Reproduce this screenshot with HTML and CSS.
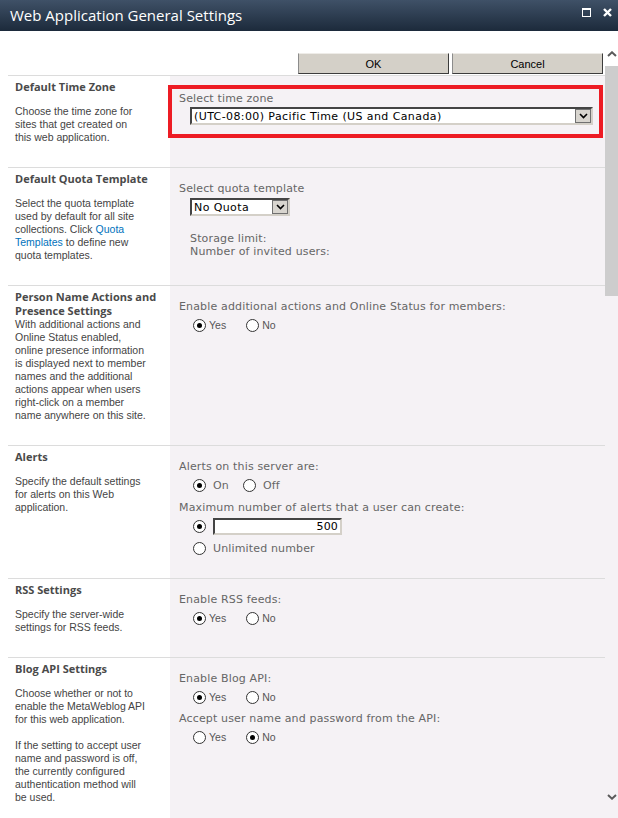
FILE: index.html
```html
<!DOCTYPE html>
<html lang="en">

<head>
    <meta charset="UTF-8">
    <title>Web Application General Settings</title>
    <link rel="stylesheet" href="styles.css">
</head>

<body>
    <div class="dialog">
        <div class="titlebar">
            <h1>Web Application General Settings</h1>
            <div class="window-buttons">
                <svg width="9" height="9" viewBox="0 0 9 9">
                    <rect x="0.5" y="0.5" width="8" height="8" fill="none" stroke="#fff" />
                    <rect x="0" y="0" width="9" height="2" fill="#fff" />
                </svg>
                <svg width="9" height="9" viewBox="0 0 9 9">
                    <path d="M1 1 L8 8 M8 1 L1 8" stroke="#fff" stroke-width="2.4" />
                </svg>
            </div>
        </div>

        <div class="viewport">
            <div class="page">
                <div class="toolbar">
                    <button class="btn" type="button">OK</button>
                    <button class="btn" type="button">Cancel</button>
                </div>

                <!-- time zone -->
                <div class="section">
                    <div class="section-info">
                        <h3>Default Time Zone</h3>
                        <p>Choose the time zone for<br>sites that get created on<br>this web application.</p>
                    </div>
                    <div class="section-body">
                        <div class="highlight">
                            <div class="field-label">Select time zone</div>
                            <div class="select select-timezone">
                                <span class="select-value">(UTC-08:00) Pacific Time (US and Canada)</span>
                                <span class="select-arrow">
                                    <svg width="9" height="6" viewBox="0 0 9 6"><path d="M1 1 L4.5 4.5 L8 1" fill="none" stroke="#000" stroke-width="1.6" /></svg>
                                </span>
                            </div>
                        </div>
                    </div>
                </div>

                <!-- quota -->
                <div class="section">
                    <div class="section-info">
                        <h3>Default Quota Template</h3>
                        <p>Select the quota template<br>used by default for all site<br>collections. Click <a href="#">Quota<br>Templates</a> to define new<br>quota templates.</p>
                    </div>
                    <div class="section-body">
                        <div class="field-label">Select quota template</div>
                        <div class="select select-quota">
                            <span class="select-value">No Quota</span>
                            <span class="select-arrow">
                                <svg width="9" height="6" viewBox="0 0 9 6"><path d="M1 1 L4.5 4.5 L8 1" fill="none" stroke="#000" stroke-width="1.6" /></svg>
                            </span>
                        </div>
                        <div class="quota-info">Storage limit:<br>Number of invited users:</div>
                    </div>
                </div>

                <!-- presence -->
                <div class="section">
                    <div class="section-info tight">
                        <h3>Person Name Actions and<br>Presence Settings</h3>
                        <p>With additional actions and<br>Online Status enabled,<br>online presence information<br>is displayed next to member<br>names and the additional<br>actions appear when users<br>right-click on a member<br>name anywhere on this site.</p>
                    </div>
                    <div class="section-body">
                        <div class="field-label">Enable additional actions and Online Status for members:</div>
                        <div class="choices">
                            <label class="choice"><span class="radio checked"></span>Yes</label>
                            <label class="choice"><span class="radio"></span>No</label>
                        </div>
                    </div>
                </div>

                <!-- alerts -->
                <div class="section">
                    <div class="section-info">
                        <h3>Alerts</h3>
                        <p>Specify the default settings<br>for alerts on this Web<br>application.</p>
                    </div>
                    <div class="section-body">
                        <div class="field-label">Alerts on this server are:</div>
                        <div class="choices choices-wide">
                            <label class="choice"><span class="radio checked"></span>On</label>
                            <label class="choice"><span class="radio"></span>Off</label>
                        </div>
                        <div class="field-label">Maximum number of alerts that a user can create:</div>
                        <div class="choice-row">
                            <span class="radio checked"></span>
                            <span class="textbox">500</span>
                        </div>
                        <div class="choices choices-wide choices-last">
                            <label class="choice"><span class="radio"></span>Unlimited number</label>
                        </div>
                    </div>
                </div>

                <!-- rss -->
                <div class="section">
                    <div class="section-info">
                        <h3>RSS Settings</h3>
                        <p>Specify the server-wide<br>settings for RSS feeds.</p>
                    </div>
                    <div class="section-body">
                        <div class="field-label">Enable RSS feeds:</div>
                        <div class="choices">
                            <label class="choice"><span class="radio checked"></span>Yes</label>
                            <label class="choice"><span class="radio"></span>No</label>
                        </div>
                    </div>
                </div>

                <!-- blog api -->
                <div class="section">
                    <div class="section-info">
                        <h3>Blog API Settings</h3>
                        <p>Choose whether or not to<br>enable the MetaWeblog API<br>for this web application.</p>
                        <p>If the setting to accept user<br>name and password is off,<br>the currently configured<br>authentication method will<br>be used.</p>
                    </div>
                    <div class="section-body">
                        <div class="field-label">Enable Blog API:</div>
                        <div class="choices">
                            <label class="choice"><span class="radio checked"></span>Yes</label>
                            <label class="choice"><span class="radio"></span>No</label>
                        </div>
                        <div class="field-label">Accept user name and password from the API:</div>
                        <div class="choices">
                            <label class="choice"><span class="radio"></span>Yes</label>
                            <label class="choice"><span class="radio checked"></span>No</label>
                        </div>
                    </div>
                </div>
            </div>

            <div class="scrollbar">
                <svg class="scroll-up" width="10" height="6" viewBox="0 0 10 6"><path d="M1 5 L5 1.3 L9 5" fill="none" stroke="#5a5a5a" stroke-width="2" /></svg>
                <div class="scroll-thumb"></div>
                <svg class="scroll-down" width="10" height="6" viewBox="0 0 10 6"><path d="M1 1 L5 4.7 L9 1" fill="none" stroke="#5a5a5a" stroke-width="2" /></svg>
            </div>
        </div>
    </div>
</body>

</html>
```

FILE: styles.css
```css
body {
    margin: 0;
    font-family: "Liberation Sans", Arial, sans-serif;
    background: #fff;
}

.dialog {
    width: 618px;
    height: 818px;
    display: flex;
    flex-direction: column;
    overflow: hidden;
}

/* title bar */

.titlebar {
    height: 31px;
    flex: none;
    display: flex;
    align-items: center;
    padding: 0 6px 0 10px;
    background: linear-gradient(#3f5167, #1c2a3b);
}

.titlebar h1 {
    flex: 1;
    margin: 0 0 1px;
    font: normal 15px "Open Sans", sans-serif;
    color: #fff;
}

.window-buttons {
    display: flex;
    align-items: center;
    gap: 12px;
    margin-bottom: 6px;
}

/* content */

.viewport {
    flex: 1;
    display: flex;
    min-height: 0;
}

.page {
    flex: 1;
    padding-left: 8px;
}

.toolbar {
    height: 44px;
    box-sizing: border-box;
    display: flex;
    justify-content: flex-end;
    align-items: flex-end;
    gap: 3px;
    padding: 0 2px 1px 0;
}

.btn {
    width: 151px;
    height: 21px;
    padding: 0;
    background: #d4d0c8;
    border: 1px solid;
    border-color: #eeece8 #3c3c3c #3c3c3c #8c8c8c;
    font: 11px "Liberation Sans", sans-serif;
    color: #000;
}

.section {
    display: grid;
    grid-template-columns: 162px 1fr;
    border-top: 1px solid #dcdcdc;
}

.section-info {
    padding: 4px 7px 23px;
    color: #444;
}

.section-info h3 {
    margin: 0 0 11px;
    font: bold 11px/14px "Open Sans", sans-serif;
    color: #4a4a4a;
}

.section-info.tight h3 {
    margin-bottom: 0;
}

.section-info p {
    margin: 0;
    font-size: 10.5px;
    line-height: 13px;
}

.section-info p + p {
    margin-top: 13px;
}

.section-info a {
    color: #0072bc;
    text-decoration: none;
}

.section-body {
    background: #f5f2f5;
    padding: 14px 2px 23px 9px;
    font: 11px/13px "DejaVu Sans", sans-serif;
    letter-spacing: 0.15px;
    color: #666;
}

.highlight {
    margin: -5px 0 0 -11px;
    padding: 3px 0 9px 7px;
    border: 4px solid #ed1c24;
}

/* fake form controls */

.select {
    height: 18px;
    box-sizing: border-box;
    display: flex;
    align-items: center;
    margin: 2px 0 0 11px;
    background: #fff;
    border: 2px solid;
    border-color: #444 #d4d0c8 #d4d0c8 #444;
    color: #000;
    letter-spacing: 0.4px;
}

.select-timezone {
    margin-right: 6px;
}

.select-quota {
    width: 100px;
    margin-top: 3px;
}

.select-value {
    flex: 1;
    padding-left: 2px;
}

.select-arrow {
    width: 16px;
    height: 14px;
    box-sizing: border-box;
    display: flex;
    align-items: center;
    justify-content: center;
    background: #d8d5cf;
    border: 1px solid #707070;
}

.quota-info {
    margin: 16px 0 0 11px;
}

.choices {
    display: flex;
    height: 13px;
    margin: 6px 0 8px 14px;
    font-family: "Liberation Sans", sans-serif;
    font-size: 10.5px;
    letter-spacing: 0;
    color: #555;
}

.choice {
    display: flex;
    align-items: center;
    gap: 3px;
    margin-right: 20px;
}

.choices-wide {
    font: 11px/13px "DejaVu Sans", sans-serif;
    letter-spacing: 0.15px;
    color: #666;
    margin-bottom: 9px;
}

.choices-wide .choice {
    gap: 7px;
    margin-right: 14px;
}

.choices-last {
    margin: 6px 0 0 14px;
}

.choice-row {
    display: flex;
    align-items: center;
    gap: 7px;
    height: 19px;
    margin: 3px 0 0 14px;
}

.radio {
    width: 13px;
    height: 13px;
    box-sizing: border-box;
    flex: none;
    display: flex;
    align-items: center;
    justify-content: center;
    border: 1px solid #333;
    border-radius: 50%;
    background: #fff;
}

.radio.checked::after {
    content: "";
    width: 5px;
    height: 5px;
    border-radius: 50%;
    background: #000;
}

.textbox {
    width: 129px;
    height: 17px;
    box-sizing: border-box;
    padding-right: 2px;
    text-align: right;
    line-height: 13px;
    background: #fff;
    border: 2px solid;
    border-color: #444 #d4d0c8 #d4d0c8 #444;
    color: #000;
}

/* scrollbar */

.scrollbar {
    width: 13px;
    flex: none;
    display: flex;
    flex-direction: column;
    align-items: center;
    background: linear-gradient(#fff 44px, #f5f2f5 44px);
}

.scroll-up {
    margin-top: 20px;
}

.scroll-thumb {
    align-self: stretch;
    height: 230px;
    margin-top: 9px;
    background: #cdcdcd;
}

.scroll-down {
    margin: auto 0 18px;
}
```
